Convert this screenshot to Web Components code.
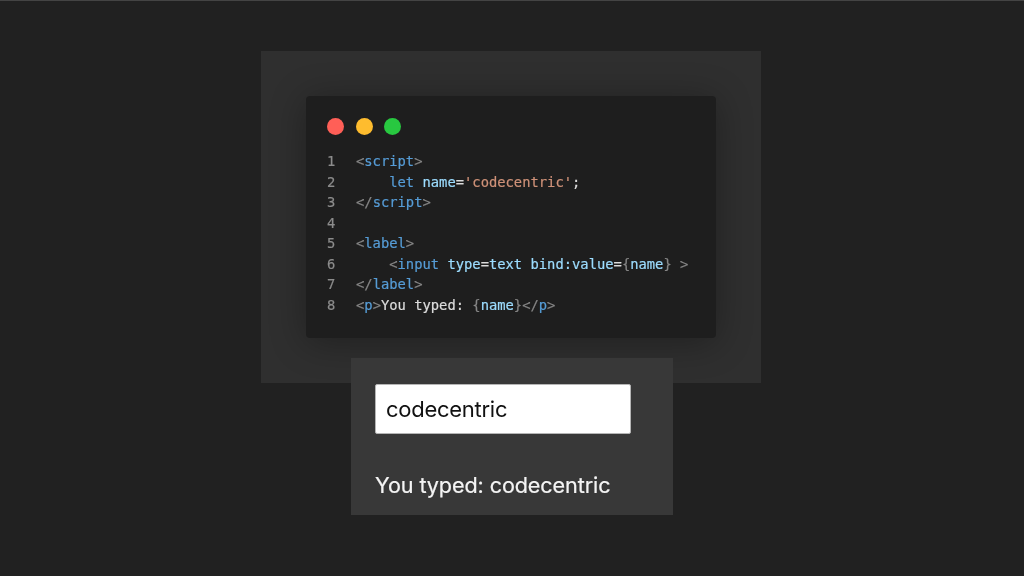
<!DOCTYPE html>
<html>
<head>
<meta charset="utf-8">
<style>
  html, body { margin: 0; height: 100%; background: #212121; }
  body { overflow: hidden; }
</style>
</head>
<body>
<demo-slide>
  <code-window>
    <code-line n="1"><i class="p">&lt;</i><i class="t">script</i><i class="p">&gt;</i></code-line>
    <code-line n="2">    <i class="t">let</i> <i class="v">name</i>=<i class="s">'codecentric'</i>;</code-line>
    <code-line n="3"><i class="p">&lt;/</i><i class="t">script</i><i class="p">&gt;</i></code-line>
    <code-line n="4"></code-line>
    <code-line n="5"><i class="p">&lt;</i><i class="t">label</i><i class="p">&gt;</i></code-line>
    <code-line n="6">    <i class="p">&lt;</i><i class="t">input</i> <i class="v">type</i>=<i class="v">text</i> <i class="v">bind:value</i>=<i class="p">{</i><i class="v">name</i><i class="p">}</i> <i class="p">&gt;</i></code-line>
    <code-line n="7"><i class="p">&lt;/</i><i class="t">label</i><i class="p">&gt;</i></code-line>
    <code-line n="8"><i class="p">&lt;</i><i class="t">p</i><i class="p">&gt;</i>You typed: <i class="p">{</i><i class="v">name</i><i class="p">}&lt;/</i><i class="t">p</i><i class="p">&gt;</i></code-line>
  </code-window>
  <result-panel value="codecentric"></result-panel>
</demo-slide>
<script>
// outer slide: lighter panel with the code window, result panel overlaps its bottom edge
class DemoSlide extends HTMLElement {
  constructor() {
    super();
    this.attachShadow({ mode: "open" });
    this.shadowRoot.innerHTML = `
      <style>
        :host {
          display: flex;
          flex-direction: column;
          box-sizing: border-box;
          width: 1024px;
          height: 576px;
          padding-top: 51px;
          border-top: 1px solid #444;
        }
        .panel {
          box-sizing: border-box;
          width: 500px;
          height: 332px;
          margin: -1px 0 0 261px;
          padding: 45px;
          background: #2f2f2f;
        }
        .below {
          margin: -25px 0 0 351px;
          position: relative;
        }
        .panel, .below { filter: blur(.3px); }
      </style>
      <div class="panel"><slot></slot></div>
      <div class="below"><slot name="below"></slot></div>
    `;
  }
  connectedCallback() {
    const result = this.querySelector("result-panel");
    if (result) result.slot = "below";
  }
}

class CodeWindow extends HTMLElement {
  constructor() {
    super();
    this.attachShadow({ mode: "open" });
    this.shadowRoot.innerHTML = `
      <style>
        :host {
          display: block;
          box-sizing: border-box;
          width: 410px;
          height: 242px;
          padding: 22px 0 0 21px;
          background: #1e1e1e;
          border-radius: 4px;
          box-shadow: 0 4px 36px rgba(0, 0, 0, .32);
        }
        .dots { display: flex; gap: 11.5px; height: 18px; margin-bottom: 15px; }
        .dot { width: 17px; height: 17px; border-radius: 50%; }
        .lines { display: flex; flex-direction: column; }
      </style>
      <div class="dots">
        <div class="dot" style="background:#ff5f57"></div>
        <div class="dot" style="background:#febc2e"></div>
        <div class="dot" style="background:#28c840"></div>
      </div>
      <div class="lines"><slot></slot></div>
    `;
  }
}

class CodeLine extends HTMLElement {
  constructor() {
    super();
    this.attachShadow({ mode: "open" });
    this.shadowRoot.innerHTML = `
      <style>
        :host {
          display: flex;
          height: 20.57px;
          font: 13.8px/20.57px "DejaVu Sans Mono", monospace;
          color: #dcdcdc;
          white-space: pre;
          -webkit-text-stroke: .2px;
        }
        .num { width: 29px; color: #8c8c8c; }
      </style>
      <span class="num"></span><span><slot></slot></span>
    `;
  }
  styleTokens() {
    const colors = { p: "#858585", t: "#569cd6", v: "#9cdcfe", s: "#ce9178" };
    this.querySelectorAll("i").forEach((el) => {
      el.style.fontStyle = "normal";
      el.style.color = colors[el.className];
    });
  }
  connectedCallback() {
    this.shadowRoot.querySelector(".num").textContent = this.getAttribute("n");
    this.styleTokens();
  }
}

class ResultPanel extends HTMLElement {
  constructor() {
    super();
    this.attachShadow({ mode: "open" });
  }
  connectedCallback() {
    const value = this.getAttribute("value") || "";
    this.shadowRoot.innerHTML = `
      <style>
        :host {
          display: block;
          box-sizing: border-box;
          width: 322px;
          height: 157px;
          padding: 26px 0 0 24px;
          background: #383838;
          font-family: Inter, "Liberation Sans", sans-serif;
        }
        .field {
          box-sizing: border-box;
          width: 256px;
          height: 50px;
          padding-left: 10px;
          display: flex;
          align-items: center;
          background: #fff;
          border: 1px solid #b5b5b5;
          border-radius: 2px;
          color: #111;
          font-size: 22px;
          letter-spacing: -.27px;
        }
        p {
          margin: 36px 0 0;
          color: #f4f4f4;
          font-size: 21.6px;
          line-height: 30px;
          letter-spacing: -.1px;
          -webkit-text-stroke: .2px;
        }
      </style>
      <div class="field">${value}</div>
      <p>You typed: ${value}</p>
    `;
  }
}

customElements.define("demo-slide", DemoSlide);
customElements.define("code-window", CodeWindow);
customElements.define("code-line", CodeLine);
customElements.define("result-panel", ResultPanel);
</script>
</body>
</html>
